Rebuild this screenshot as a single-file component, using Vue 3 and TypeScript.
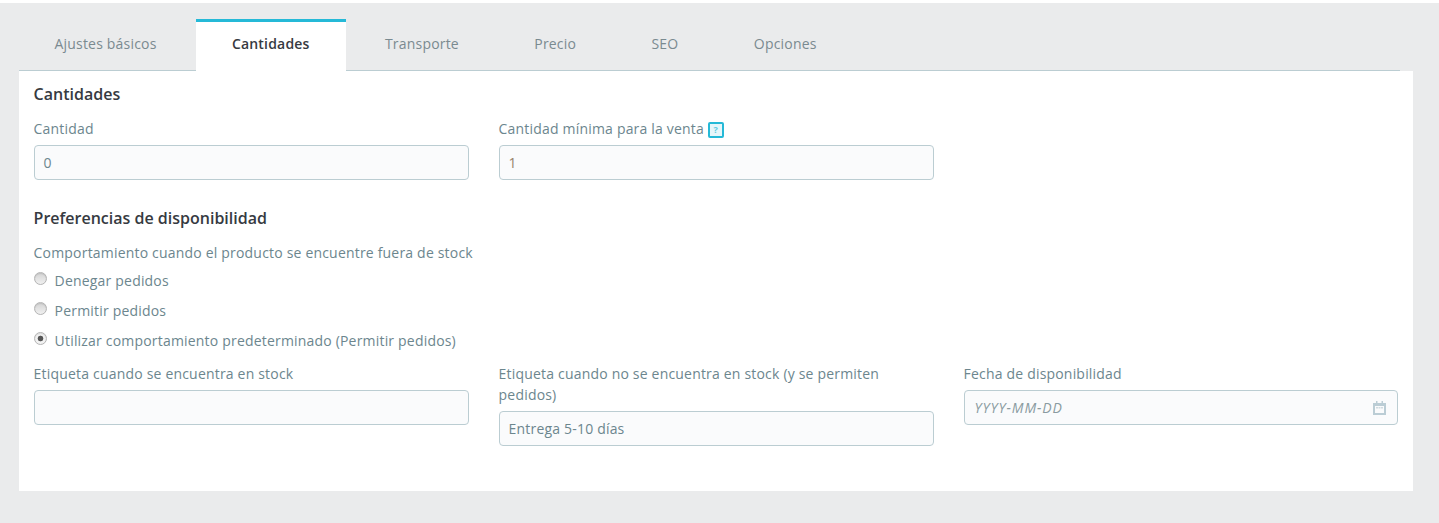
<script setup lang="ts">
const tabs = [
  { label: 'Ajustes básicos', active: false },
  { label: 'Cantidades', active: true },
  { label: 'Transporte', active: false },
  { label: 'Precio', active: false },
  { label: 'SEO', active: false },
  { label: 'Opciones', active: false },
]
const radios = [
  { label: 'Denegar pedidos', checked: false },
  { label: 'Permitir pedidos', checked: false },
  { label: 'Utilizar comportamiento predeterminado (Permitir pedidos)', checked: true },
]
</script>

<template>
  <div class="page">
    <nav class="tabs">
      <div v-for="t in tabs" :key="t.label" class="tab" :class="{ active: t.active }">{{ t.label }}</div>
    </nav>
    <main class="panel">
      <h2 class="title">Cantidades</h2>
      <div class="row first">
        <div class="field">
          <label class="label">Cantidad</label>
          <div class="input">0</div>
        </div>
        <div class="field">
          <label class="label with-help">Cantidad mínima para la venta <span class="help"><span>?</span></span></label>
          <div class="input orange">1</div>
        </div>
      </div>
      <h2 class="title second">Preferencias de disponibilidad</h2>
      <p class="label behaviour">Comportamiento cuando el producto se encuentre fuera de stock</p>
      <div class="radios">
        <div v-for="r in radios" :key="r.label" class="radio">
          <span class="dot" :class="{ checked: r.checked }"></span>
          <span class="radio-label">{{ r.label }}</span>
        </div>
      </div>
      <div class="row last">
        <div class="field">
          <label class="label">Etiqueta cuando se encuentra en stock</label>
          <div class="input"></div>
        </div>
        <div class="field">
          <label class="label">Etiqueta cuando no se encuentra en stock (y se permiten pedidos)</label>
          <div class="input">Entrega 5-10 días</div>
        </div>
        <div class="field">
          <label class="label">Fecha de disponibilidad</label>
          <div class="input date">
            <span class="placeholder">YYYY-MM-DD</span>
            <svg class="cal" width="13" height="14" viewBox="0 0 13 14" aria-hidden="true">
              <path fill="#bbcdd5" d="M3 0h1.5v2h4V0H10v2h3v12H0V2h3z" />
              <rect x="2" y="5" width="9" height="7" fill="#fafbfc" />
              <rect x="3" y="6" width="2" height="1.5" fill="#cfdbe0" />
              <rect x="5.5" y="6" width="2" height="1.5" fill="#cfdbe0" />
              <rect x="8" y="6" width="2" height="1.5" fill="#cfdbe0" />
            </svg>
          </div>
        </div>
      </div>
    </main>
  </div>
</template>

<style>
html, body { margin: 0; background: #fff; }
</style>

<style scoped>
.page {
  box-sizing: border-box;
  height: 520px;
  margin-top: 3px;
  padding: 16px 26px 0 19px;
  background: #eaebec;
  font-family: "Open Sans", sans-serif;
  font-size: 14px;
  letter-spacing: 0.19px;
  color: #6c868e;
}
.tabs {
  display: flex;
  gap: 3.4px;
  height: 52px;
  margin-right: 13px;
  box-sizing: border-box;
  border-bottom: 1px solid #bbcdd2;
}
.tab {
  box-sizing: border-box;
  height: 52px;
  padding: 12px 36px 0;
  border-top: 3px solid transparent;
  line-height: 19px;
  color: #7a8a90;
}
.tab:first-child { padding-left: 35.5px; }
.tab.active {
  background: #fff;
  border-top-color: #25b9d7;
  color: #363a41;
  font-weight: 550;
}
.panel {
  box-sizing: border-box;
  height: 420px;
  padding: 12px 15px 0 14.6px;
  background: #fff;
}
.title {
  margin: 0;
  font-size: 16px;
  font-weight: 550;
  line-height: 22px;
  letter-spacing: 0;
  color: #363a41;
}
.title.second { margin-top: 27px; }
.row {
  display: grid;
  grid-template-columns: repeat(3, 435px);
  gap: 30px;
}
.row.first { margin-top: 13px; }
.row.last { margin-top: 8px; }
.field { display: flex; flex-direction: column; }
.label {
  display: block;
  margin: 0 0 6px;
  line-height: 21px;
  color: #6c868e;
}
.with-help { height: 21px; white-space: nowrap; }
.input {
  box-sizing: border-box;
  height: 35px;
  padding: 0 9px;
  border: 1px solid #bbcdd2;
  border-radius: 4px;
  background: #fafbfc;
  line-height: 33px;
  color: #6c868e;
}
.input.orange { color: #96826a; }
.date {
  display: flex;
  align-items: center;
  justify-content: space-between;
  width: 434px;
  padding: 0 11px 0 10px;
}
.placeholder { font-style: italic; letter-spacing: 0.9px; color: #8a9ba1; }
.cal { display: block; }
.help {
  display: inline-flex;
  align-items: center;
  justify-content: center;
  box-sizing: border-box;
  width: 16px;
  height: 16px;
  border: 2px solid #25b9d7;
  border-radius: 2px;
  background: #e6f6fa;
  color: #62cbe2;
  font-size: 9px;
  font-weight: 700;
  line-height: 1;
  vertical-align: 1px;
}
.behaviour { margin: 13px 0 0; }
.radios { margin-top: 2px; }
.radio {
  display: flex;
  align-items: center;
  height: 30px;
}
.dot {
  box-sizing: border-box;
  width: 13px;
  height: 13px;
  margin: -3px 8px 0 0;
  border: 1px solid #b4b4b4;
  border-radius: 50%;
  background: linear-gradient(#d4d4d4, #f0f0f0);
  box-shadow: inset 0 1px 1px rgba(0, 0, 0, 0.1);
}
.dot.checked {
  background: radial-gradient(circle, #555 0, #555 2.5px, #f2f2f2 3.2px);
}
.radio-label { line-height: 21px; color: #6c868e; }
</style>
